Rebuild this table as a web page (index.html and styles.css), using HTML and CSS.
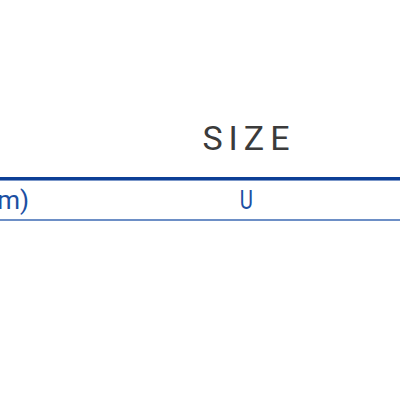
FILE: index.html
```html
<!DOCTYPE html>
<html>
<head>
<meta charset="utf-8">
<link rel="stylesheet" href="styles.css">
</head>
<body>
<section class="size-table">
  <div class="head-row">
    <div class="head-spacer"></div>
    <h2 class="title">SIZE</h2>
  </div>
  <div class="table">
    <div class="cell label"><span class="txt">(cm)</span></div>
    <div class="cell value"><span class="txt">U</span></div>
  </div>
</section>
</body>
</html>
```
FILE: styles.css
```css
html, body {
  margin: 0;
  padding: 0;
  background: #ffffff;
}
.size-table {
  padding-top: 118px;
  width: 400px;
}
.head-row {
  display: grid;
  grid-template-columns: 92px 1fr;
  height: 59px;
}
.title {
  margin: 0;
  text-align: center;
  font-family: Roboto, "Liberation Sans", sans-serif;
  font-weight: 400;
  font-size: 34px;
  line-height: 40px;
  letter-spacing: 6px;
  padding-left: 6px;
  color: #3b3b3b;
}
.table {
  display: grid;
  grid-template-columns: 92px 1fr;
  border-top: 3px solid #0d3f96;
  border-bottom: 2px solid #6d8fc6;
  box-shadow: inset 0 1px 0 #7b97c9;
  height: 39px;
  align-items: center;
}
.cell {
  font-family: Roboto, "Liberation Sans", sans-serif;
  font-size: 26px;
  line-height: 30px;
  color: #1c4fa3;
  white-space: nowrap;
}
.txt {
  display: inline-block;
}
.label {
  display: flex;
  justify-content: flex-end;
  padding-right: 63px;
  min-width: 0;
}
.value {
  display: flex;
  justify-content: center;
}
.value .txt {
  transform: scaleX(0.78);
}
```
